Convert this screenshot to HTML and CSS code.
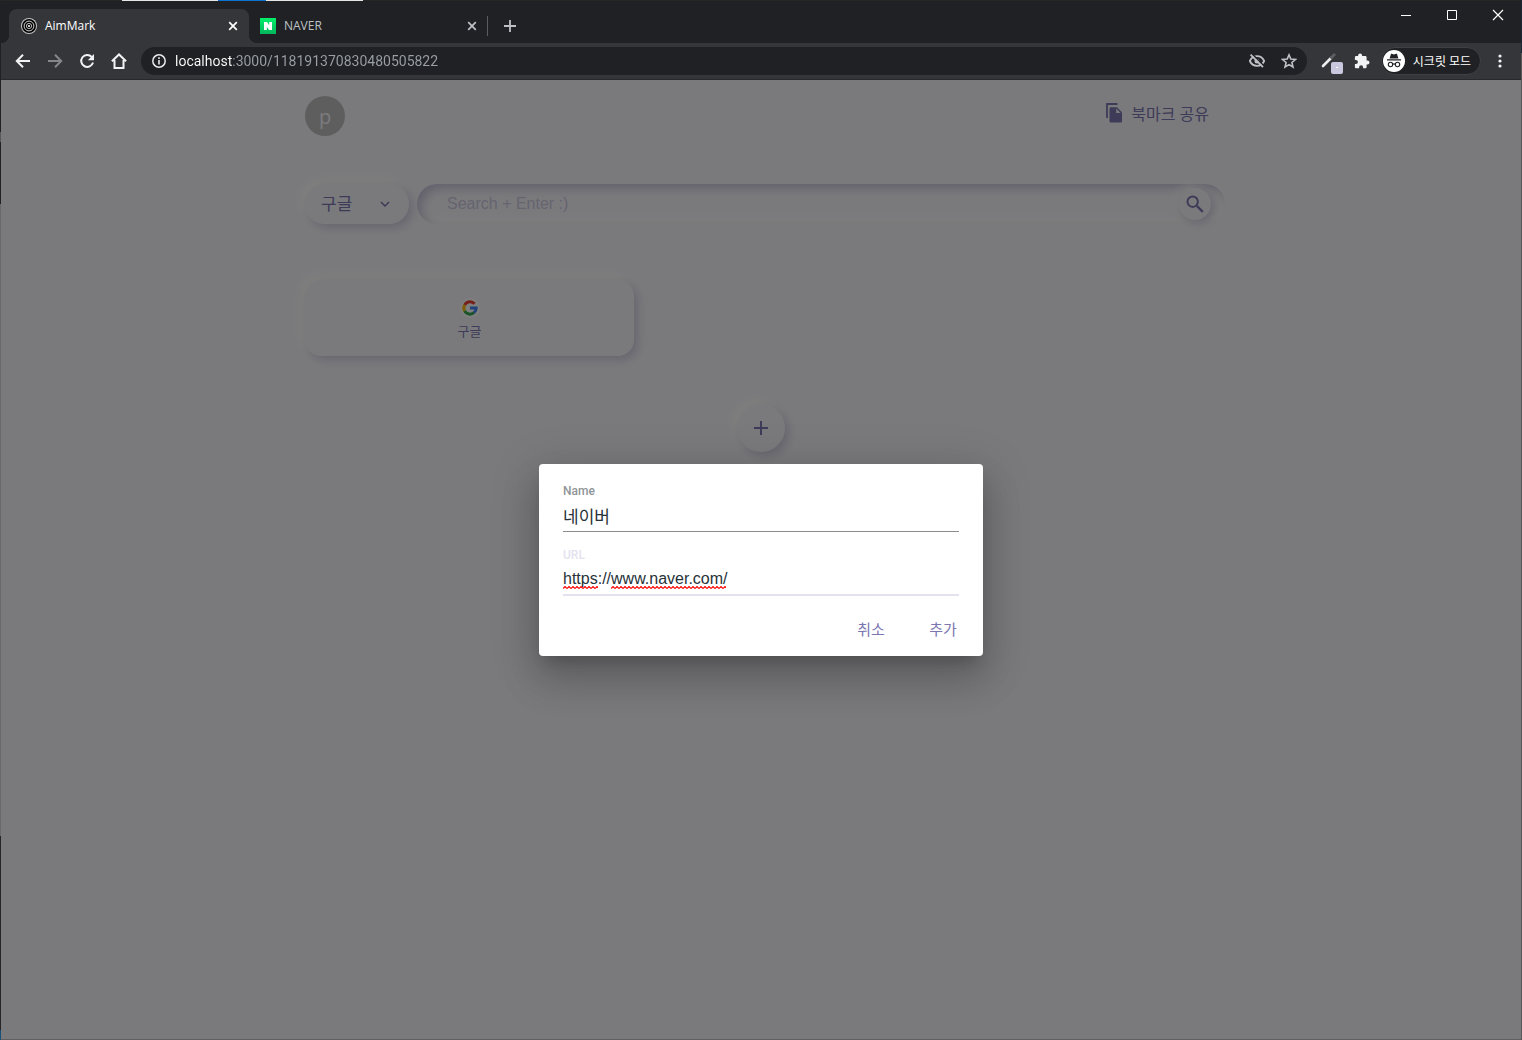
FILE: index.html
```html
<!DOCTYPE html>
<html lang="ko">
<head>
<meta charset="utf-8">
<meta name="viewport" content="width=device-width, initial-scale=1">
<title>AimMark</title>
<link rel="stylesheet" href="styles.css">
</head>
<body>
<div class="window">
  <header class="tab-strip">
    <div class="tab tab-active">
      <svg class="icon" viewBox="0 0 16 16" aria-hidden="true"><circle cx="8" cy="8" r="8" fill="#c4c4c4"/><circle cx="8" cy="8" r="7" fill="#000"/><g fill="none" stroke="#d0d0d0"><circle cx="8" cy="8" r="4.900" stroke-width="1"/><circle cx="8" cy="8" r="2.600" stroke-width=".9"/></g><circle cx="8" cy="8" r="1.100" fill="#fff"/></svg>
      <span class="tab-title">AimMark</span>
      <button class="tab-close" aria-label="Close AimMark"><svg viewBox="0 0 10 10"><path d="M1.2 1.2l7.6 7.6M8.8 1.2L1.2 8.8" stroke="currentColor" stroke-width="1.7"/></svg></button>
    </div>
    <div class="tab tab-idle">
      <svg class="icon" viewBox="0 0 16 16" aria-hidden="true"><defs><linearGradient id="ng" x2="0" y2="1"><stop stop-color="#00f06a"/><stop offset="1" stop-color="#04b55c"/></linearGradient></defs><path fill="url(#ng)" d="M0 0h16v16H0z"/><path fill="#fff" d="M4 4h3l2.200 3.200V4H12v8H9L6.800 8.800V12H4z"/></svg>
      <span class="tab-title">NAVER</span>
      <button class="tab-close" aria-label="Close NAVER"><svg viewBox="0 0 10 10"><path d="M1.200 1.200l7.600 7.600M8.800 1.200L1.200 8.800" stroke="currentColor" stroke-width="1.700"/></svg></button>
    </div>
    <button class="new-tab" aria-label="New tab"><svg viewBox="0 0 12 12"><path d="M6 0v12M0 6h12" stroke="currentColor" stroke-width="1.800"/></svg></button>
    <div class="window-controls">
      <button aria-label="Minimize"><svg viewBox="0 0 12 12"><path d="M1 6.500h10" stroke="#fff"/></svg></button>
      <button aria-label="Maximize"><svg viewBox="0 0 12 12"><path d="M1.500 1.500h9v9h-9z" fill="none" stroke="#fff"/></svg></button>
      <button aria-label="Close"><svg viewBox="0 0 12 12"><path d="M1 1l10 10M11 1L1 11" stroke="#fff" stroke-width="1.200"/></svg></button>
    </div>
  </header>

  <nav class="toolbar">
    <div class="nav-buttons">
      <button class="tool" aria-label="Back"><svg viewBox="0 0 16 16"><path d="M15 8H2.500M8 1.800L1.800 8 8 14.200" fill="none" stroke="currentColor" stroke-width="2"/></svg></button>
      <button class="tool tool-off" aria-label="Forward"><svg viewBox="0 0 16 16"><path d="M1 8h12.500M8 1.800L14.200 8 8 14.200" fill="none" stroke="currentColor" stroke-width="2"/></svg></button>
      <button class="tool" aria-label="Reload"><svg viewBox="0 0 16 16"><path d="M12.700 3.900A6 6 0 1 0 14 9.500" fill="none" stroke="currentColor" stroke-width="2"/><path d="M15 1v6.200H8.800z" fill="currentColor"/></svg></button>
      <button class="tool" aria-label="Home"><svg viewBox="0 0 16 16"><path d="M.9 8.300L8 1.500l7.100 6.800M3.500 7v8h9V7" fill="none" stroke="currentColor" stroke-width="2"/></svg></button>
    </div>
    <div class="omnibox">
      <svg class="site-info" viewBox="0 0 14 14" aria-hidden="true"><circle cx="7" cy="7" r="6.200" fill="none" stroke="#e8eaed" stroke-width="1.500"/><path d="M7 6v4.500M7 3.300V5" stroke="#e8eaed" stroke-width="1.600"/></svg>
      <input class="address" type="text" aria-label="Address" spellcheck="false" value="localhost:3000/118191370830480505822">
      <div class="omnibox-actions">
        <button class="tool tool-soft" aria-label="Third-party cookies blocked"><svg viewBox="0 0 16 16"><path d="M.8 8C2.200 5 4.900 3.200 8 3.200S13.800 5 15.200 8C13.800 11 11.100 12.800 8 12.800S2.200 11 .8 8z" fill="none" stroke="currentColor" stroke-width="1.800"/><circle cx="8" cy="8" r="2.500" fill="currentColor"/><path d="M3 .8L15 13" stroke="#202124" stroke-width="1.600"/><path d="M1.600 1.600L14 14.200" stroke="currentColor" stroke-width="1.800"/></svg></button>
        <button class="tool tool-soft" aria-label="Bookmark"><svg viewBox="0 0 16 16"><path d="M8 1.900l1.800 4.200 4.600.4-3.500 3 1.100 4.500L8 11.600 4 14l1.100-4.500-3.500-3 4.600-.4z" fill="none" stroke="currentColor" stroke-width="1.600"/></svg></button>
      </div>
    </div>
    <div class="extensions">
      <button class="picker" aria-label="Color picker"><svg viewBox="0 0 22 24"><path d="M2 17l8-8" stroke="#eee" stroke-width="2.600" stroke-linecap="round"/><path d="M9.500 9.500L14 5" stroke="#5c5d60" stroke-width="3"/><rect x="10" y="13" width="12" height="12" rx="2" fill="#cac8de"/><path d="M15 18.500h2" stroke="#fff"/></svg></button>
      <button class="tool" aria-label="Extensions"><svg viewBox="0 0 16 16"><path fill="currentColor" d="M13.500 7.600h-.9V4.400c0-.8-.6-1.400-1.400-1.400H8.100v-.6a2 2 0 0 0-4 0V3H2.200C1.400 3 .9 3.600.9 4.400v2.500h1a2 2 0 0 1 0 4h-1v3c0 .8.500 1.300 1.300 1.300h2.900v-.9a2 2 0 0 1 4 0v.9h2.100c.8 0 1.400-.5 1.400-1.300v-2.300h.9a2 2 0 0 0 0-4z"/></svg></button>
      <button class="incognito">
        <svg class="spy" viewBox="0 0 22 22" aria-hidden="true"><circle cx="11" cy="11" r="11" fill="#fff"/><path d="M6.600 8.500l1.300-4.300c.1-.4.500-.5.900-.4l2.200.7 2.200-.7c.4-.1.800 0 .9.400l1.300 4.300zM4 9.300h14v1.200H4z" fill="#202124"/><g fill="none" stroke="#202124" stroke-width="1.100"><circle cx="7.500" cy="14.500" r="2.200"/><circle cx="14.500" cy="14.500" r="2.200"/><path d="M9.700 14.300q1.300-.8 2.600 0"/></g></svg>
        <span>시크릿 모드</span>
      </button>
      <button class="tool" aria-label="Menu"><svg viewBox="0 0 16 16" fill="currentColor"><circle cx="8" cy="3" r="1.600"/><circle cx="8" cy="8" r="1.600"/><circle cx="8" cy="13" r="1.600"/></svg></button>
    </div>
  </nav>

  <div class="viewport">
    <main class="page">
      <div class="top-row">
        <div class="avatar">p</div>
        <button class="share">
          <svg viewBox="0 0 18 20" aria-hidden="true"><path d="M12.500 1H2v14" fill="none" stroke="currentColor" stroke-width="1.800"/><path fill="currentColor" d="M6 4.200h6l5 5V18c0 .9-.6 1.600-1.500 1.600H6.100c-.9 0-1.600-.7-1.600-1.600V5.800c0-.9.6-1.600 1.500-1.600zm5.200 1.300V10h4.500z"/></svg>
          <span>북마크 공유</span>
        </button>
      </div>

      <form class="search-row">
        <div class="engine">
          <select class="engine-select" aria-label="검색 엔진"><option>구글</option></select>
          <svg class="engine-arrow" viewBox="0 0 10 6" aria-hidden="true"><path d="M1 1l4 4 4-4" fill="none" stroke="currentColor" stroke-width="1.500"/></svg>
        </div>
        <div class="search">
          <input class="search-input" type="text" placeholder="Search + Enter :)" aria-label="Search">
          <button class="search-go" type="button" aria-label="Search"><svg viewBox="0 0 18 18"><circle cx="6.700" cy="6.700" r="5.200" fill="none" stroke="currentColor" stroke-width="2"/><path d="M10.800 10.800l6 6" stroke="currentColor" stroke-width="2.400"/></svg></button>
        </div>
      </form>

      <div class="bookmarks">
        <a class="card" href="#google">
          <svg class="card-icon" viewBox="0 0 20 20" aria-hidden="true"><circle cx="10" cy="10" r="10" fill="#fff"/><g fill="none" stroke-width="3"><path d="M14.600 5.800A6.200 6.200 0 0 0 4.600 7" stroke="#ea4335"/><path d="M4.600 7a6.200 6.200 0 0 0 0 6" stroke="#fbbc05"/><path d="M4.600 13a6.200 6.200 0 0 0 9.400 1.700" stroke="#34a853"/><path d="M14 14.700a6.200 6.200 0 0 0 2.200-4.700H10" stroke="#4285f4"/></g></svg>
          <span>구글</span>
        </a>
      </div>

      <button class="add" aria-label="북마크 추가"><svg viewBox="0 0 14 14"><path d="M7 0v14M0 7h14" stroke="currentColor" stroke-width="2"/></svg></button>
    </main>

    <div class="backdrop">
      <form class="dialog" role="dialog" aria-label="북마크 추가">
        <div class="field">
          <label for="name">Name</label>
          <input id="name" class="field-input field-korean" type="text" value="네이버">
        </div>
        <div class="field field-focus">
          <label for="url">URL</label>
          <input id="url" class="field-input" type="text" spellcheck="false" value="https://www.naver.com/">
          <svg class="squiggle" viewBox="0 0 164 3" aria-hidden="true"><defs><pattern id="wave" width="4" height="3" patternUnits="userSpaceOnUse"><path d="M0 2.500L2 .5l2 2" fill="none" stroke="#f00" stroke-width="1.100"/></pattern></defs><path fill="url(#wave)" d="M0 0h35v3H0zM48 0h115v3H48z"/></svg>
        </div>
        <div class="actions">
          <button type="button" class="action">취소</button>
          <button type="button" class="action">추가</button>
        </div>
      </form>
    </div>
  </div>
</div>
</body>
</html>
```
FILE: styles.css
```css
* {
  box-sizing: border-box;
}

body {
  margin: 0;
  min-height: 100vh;
  padding: 1px;
  display: flex;
  background:
    linear-gradient(90deg, transparent 122px, #e6e6e6 122px, #e6e6e6 218px, #0b74d1 218px, #0b74d1 266px, #e6e6e6 266px, #e6e6e6 363px, transparent 363px) top / 100% 1px no-repeat,
    linear-gradient(#202124 132px, #58585a 132px, #58585a 142px, #202124 142px, #202124 204px, #69696b 204px, #69696b 836px, #252527 836px, #252527 1030px, #18507a 1030px) left / 1px 100% no-repeat,
    linear-gradient(#17283a 53px, #58585a 53px) right / 1px 100% no-repeat,
    linear-gradient(#252724, #252724) top / 100% 1px no-repeat,
    #5f5f61;
  font-family: "Open Sans", "Noto Sans CJK KR", sans-serif;
}

button {
  display: flex;
  align-items: center;
  justify-content: center;
  padding: 0;
  border: 0;
  background: none;
  color: inherit;
  font: inherit;
}

input,
select {
  border: 0;
  outline: 0;
  padding: 0;
  background: none;
  font: inherit;
}

svg {
  display: block;
  flex: none;
}

.window {
  flex: 1;
  display: flex;
  flex-direction: column;
}

/* Tab strip */
.tab-strip {
  display: flex;
  align-items: flex-end;
  height: 42px;
  padding-left: 8px;
  background: #202124;
  color: #bdc1c6;
}

.tab {
  position: relative;
  display: flex;
  align-items: center;
  gap: 8px;
  height: 34px;
  font-size: 12px;
  line-height: 16px;
}

.tab-active {
  width: 240px;
  padding: 0 11px 0 12px;
  border-radius: 8px 8px 0 0;
  background: #35363a;
  color: #fff;
}

.tab-active::before,
.tab-active::after {
  content: "";
  position: absolute;
  bottom: 0;
  width: 8px;
  height: 8px;
}

.tab-active::before {
  right: 100%;
  background: radial-gradient(circle at 0 0, transparent 8px, #35363a 8px);
}

.tab-active::after {
  left: 100%;
  background: radial-gradient(circle at 100% 0, transparent 8px, #35363a 8px);
}

.tab-idle {
  width: 239px;
  padding: 0 11px;
}

.tab-idle::after {
  content: "";
  position: absolute;
  right: 0;
  top: 7px;
  width: 1px;
  height: 20px;
  background: #5a5c60;
}

.icon {
  width: 16px;
  height: 16px;
}

.tab-title {
  flex: 1;
}

.tab-close svg {
  width: 10px;
  height: 10px;
}

.new-tab {
  width: 44px;
  height: 34px;
}

.new-tab svg,
.window-controls svg {
  width: 12px;
  height: 12px;
}

.window-controls {
  display: flex;
  align-self: flex-start;
  margin-left: auto;
}

.window-controls button {
  width: 46px;
  height: 28px;
}

/* Toolbar */
.toolbar {
  display: flex;
  align-items: center;
  gap: 14px;
  height: 37px;
  padding: 0 13px 0 14px;
  border-bottom: 1px solid #28292c;
  background: #35363a;
  color: #f1f3f4;
}

.nav-buttons,
.omnibox-actions {
  display: flex;
  gap: 16px;
}

.tool,
.tool svg {
  width: 16px;
  height: 16px;
}

.tool-off {
  color: #85868a;
}

.tool-soft {
  color: #bdc1c6;
}

.omnibox {
  flex: 1;
  display: flex;
  align-items: center;
  gap: 9px;
  height: 28px;
  padding: 0 10px 0 11px;
  border-radius: 14px;
  background: #202124;
}

.site-info {
  width: 14px;
  height: 14px;
}

.address {
  flex: 1;
  min-width: 0;
  height: 20px;
  background: linear-gradient(90deg, #fff 57px, #9aa0a6 57px);
  -webkit-background-clip: text;
  background-clip: text;
  color: transparent;
  font-family: Roboto, sans-serif;
  font-size: 14px;
}

.extensions {
  display: flex;
  align-items: center;
  gap: 11px;
}

.picker svg {
  width: 22px;
  height: 26px;
}

.incognito {
  gap: 8px;
  width: 100px;
  height: 28px;
  padding-right: 8px;
  border: 1px solid #3f4044;
  border-radius: 14px;
  background: #202124;
  color: #fff;
  font-size: 12px;
}

.spy {
  width: 22px;
  height: 22px;
}

/* Page */
.viewport {
  position: relative;
  flex: 1;
  display: flex;
  background: #f5f5fa;
}

.page {
  flex: 1;
  display: flex;
  flex-direction: column;
  max-width: 960px;
  margin: 0 auto;
  padding: 16px 24px;
  color: #7b76b0;
}

.top-row {
  display: flex;
  align-items: flex-start;
  justify-content: space-between;
}

.avatar {
  display: flex;
  align-items: center;
  justify-content: center;
  width: 40px;
  height: 40px;
  border-radius: 50%;
  background: #bdbdbd;
  color: #f5f5fa;
  font-size: 20px;
}

.share {
  gap: 8px;
  height: 34px;
  padding: 0 8px;
  font-size: 16px;
}

.share svg {
  width: 18px;
  height: 20px;
}

.search-row {
  display: flex;
  gap: 8px;
  margin: 48px -8px 0 0;
}

.engine,
.card,
.add {
  box-shadow: 4px 4px 10px #cfcddf, -4px -4px 10px #fffffa;
}

.engine {
  position: relative;
  width: 104px;
  height: 40px;
  border-radius: 20px;
}

.engine-select {
  width: 100%;
  height: 100%;
  padding: 0 16px 2px;
  appearance: none;
  color: inherit;
  font-size: 17px;
}

.engine-arrow {
  position: absolute;
  right: 19px;
  top: 17px;
  width: 10px;
  height: 6px;
}

.search {
  flex: 1;
  display: flex;
  align-items: center;
  height: 40px;
  padding: 0 14px 0 30px;
  border-radius: 20px;
  box-shadow: inset 5px 5px 10px #c9c7db, inset -5px -5px 10px #fafafa;
}

.search-input {
  flex: 1;
  min-width: 0;
  height: 24px;
  font-family: "Liberation Sans", sans-serif;
  font-size: 16px;
}

.search-input::placeholder {
  color: #cbc8de;
}

.search-go {
  width: 32px;
  height: 32px;
  border-radius: 50%;
  background: #f5f5fa;
  box-shadow: 3px 3px 8px #cfcddf, -3px -3px 8px #f8f8f8;
}

.search-go svg {
  width: 18px;
  height: 18px;
}

.bookmarks {
  display: grid;
  grid-template-columns: 329px;
  margin-top: 56px;
}

.card {
  display: flex;
  flex-direction: column;
  align-items: center;
  gap: 4px;
  height: 76px;
  padding-top: 18px;
  border-radius: 16px;
  color: inherit;
  font-size: 13px;
  line-height: 18px;
  text-decoration: none;
}

.card-icon {
  width: 20px;
  height: 20px;
}

.add {
  align-self: center;
  width: 48px;
  height: 48px;
  margin-top: 48px;
  border-radius: 50%;
}

.add svg {
  width: 14px;
  height: 14px;
}

/* Dialog */
.backdrop {
  position: absolute;
  inset: 0;
  display: flex;
  align-items: center;
  justify-content: center;
  background: rgba(0, 0, 0, 0.5);
}

.dialog {
  display: flex;
  flex-direction: column;
  width: 444px;
  max-width: 90%;
  padding: 20px 24px 10px;
  border-radius: 4px;
  background: #fff;
  box-shadow:
    0 11px 15px -7px rgba(0, 0, 0, 0.2),
    0 24px 38px 3px rgba(0, 0, 0, 0.14),
    0 9px 46px 8px rgba(0, 0, 0, 0.12);
}

.field {
  position: relative;
  display: flex;
  flex-direction: column;
  height: 64px;
}

.field label {
  color: #8f9598;
  font-family: Roboto, sans-serif;
  font-size: 12px;
  font-weight: 500;
  line-height: 14px;
}

.field-input {
  height: 34px;
  padding-top: 2px;
  border-bottom: 1px solid #8c8c8c;
  color: #263238;
  font-family: "Liberation Sans", "Noto Sans CJK KR", sans-serif;
  font-size: 16px;
}

.field-korean {
  font-size: 17px;
}

.field-focus label {
  color: #e4e2ef;
}

.field-focus .field-input {
  border-bottom: 2px solid #e4e2ef;
}

.squiggle {
  position: absolute;
  left: 0;
  top: 38px;
  width: 164px;
  height: 3px;
}

.actions {
  display: flex;
  justify-content: flex-end;
  gap: 8px;
  margin-right: -16px;
}

.action {
  width: 64px;
  height: 34px;
  color: #7b76b0;
  font-size: 15px;
}
```
